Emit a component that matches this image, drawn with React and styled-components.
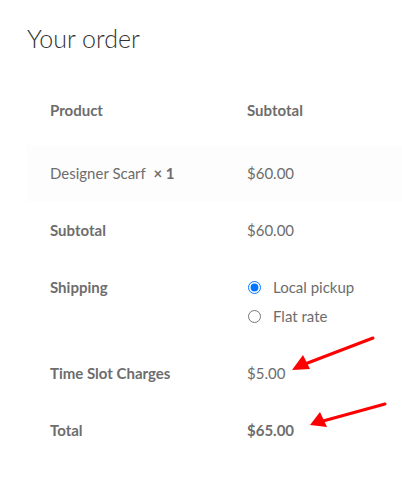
import React, { useState } from "react";
import styled, { createGlobalStyle } from "styled-components";

const GlobalStyle = createGlobalStyle`
  body {
    margin: 0;
    background: #ffffff;
    font-family: Lato, "Open Sans", sans-serif;
    color: #6d6d6d;
  }
`;

const Wrapper = styled.section`
  position: relative;
  width: 402px;
  height: 486px;
  overflow: hidden;
  padding: 23px 0 0 27px;
  box-sizing: border-box;
`;

const Title = styled.h3`
  margin: 0;
  font-size: 25px;
  font-weight: 300;
  line-height: 30px;
  color: #333333;
`;

const Table = styled.div`
  margin-top: 35px;
  width: 394px;
  display: flex;
  flex-direction: column;
`;

const Row = styled.div`
  display: grid;
  grid-template-columns: 197px 197px;
  background: ${({ $striped }) => ($striped ? "#fdfdfd" : "transparent")};
`;

const Cell = styled.div`
  padding: ${({ $head }) => ($head ? "10px 23px 22px" : "16px 23px")};
  font-size: 15px;
  line-height: 25px;
  font-weight: ${({ $bold }) => ($bold ? 700 : 400)};
  color: #6d6d6d;
  white-space: nowrap;
`;

const Qty = styled.strong`
  font-weight: 700;
  margin-left: 4px;
`;

const RadioList = styled.ul`
  list-style: none;
  margin: 0;
  padding: 0;
  display: flex;
  flex-direction: column;
  gap: 4px;
`;

const RadioItem = styled.li`
  display: flex;
  align-items: center;
  height: 25px;

  input {
    margin: 0 12px 0 1px;
    width: 13px;
    height: 13px;
  }

  label {
    font-size: 15px;
  }
`;

const Arrow = styled.svg`
  position: absolute;
  left: 0;
  top: 0;
  pointer-events: none;
`;

const App = () => {
  const [shipping, setShipping] = useState("local");

  return (
    <Wrapper>
      <GlobalStyle />
      <Title>Your order</Title>
      <Table>
        <Row>
          <Cell $head $bold>Product</Cell>
          <Cell $head $bold>Subtotal</Cell>
        </Row>
        <Row $striped>
          <Cell>
            Designer Scarf <Qty>× 1</Qty>
          </Cell>
          <Cell>$60.00</Cell>
        </Row>
        <Row>
          <Cell $bold>Subtotal</Cell>
          <Cell>$60.00</Cell>
        </Row>
        <Row>
          <Cell $bold>Shipping</Cell>
          <Cell>
            <RadioList>
              <RadioItem>
                <input
                  type="radio"
                  id="local"
                  name="ship"
                  checked={shipping === "local"}
                  onChange={() => setShipping("local")}
                />
                <label htmlFor="local">Local pickup</label>
              </RadioItem>
              <RadioItem>
                <input
                  type="radio"
                  id="flat"
                  name="ship"
                  checked={shipping === "flat"}
                  onChange={() => setShipping("flat")}
                />
                <label htmlFor="flat">Flat rate</label>
              </RadioItem>
            </RadioList>
          </Cell>
        </Row>
        <Row>
          <Cell $bold>Time Slot Charges</Cell>
          <Cell>$5.00</Cell>
        </Row>
        <Row>
          <Cell $bold>Total</Cell>
          <Cell $bold>$65.00</Cell>
        </Row>
      </Table>

      <Arrow width="402" height="486" viewBox="0 0 402 486">
        <line x1="373" y1="338" x2="305" y2="364" stroke="#ff0000" strokeWidth="3" strokeLinecap="round" />
        <polygon points="292,370 303,355 310,369" fill="#ff0000" />
        <line x1="385" y1="404" x2="323" y2="421" stroke="#ff0000" strokeWidth="3" strokeLinecap="round" />
        <polygon points="310,425 320,412 327,427" fill="#ff0000" />
      </Arrow>
    </Wrapper>
  );
};

export default App;
